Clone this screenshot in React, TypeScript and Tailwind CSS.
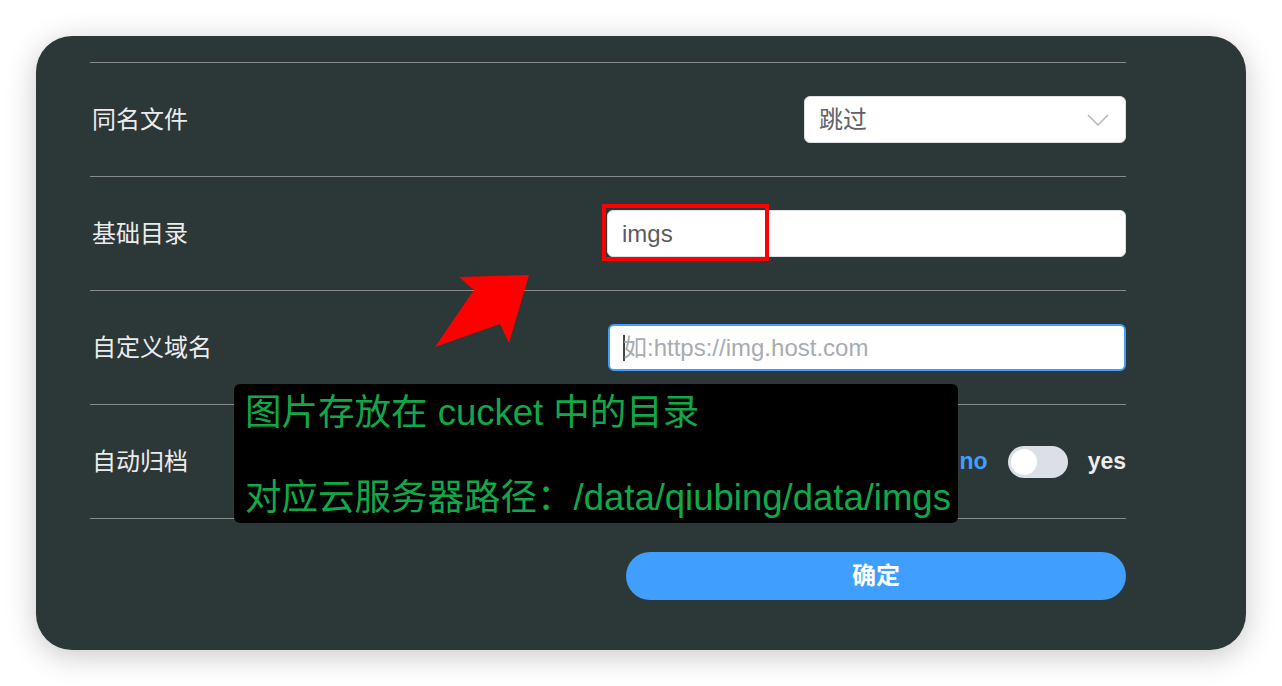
import React from "react";

const font = { fontFamily: '"Liberation Sans", "Noto Sans CJK SC", sans-serif' };

const Row = ({ label, children }: { label: string; children: React.ReactNode }) => (
  <div className="flex h-[114px] items-center justify-between border-t border-[#868a8a]">
    <span className="pl-[2px] text-[24px] text-[#ececec]">{label}</span>
    {children}
  </div>
);

const App = () => {
  return (
    <div className="min-h-[686px] w-full bg-white p-[36px]" style={font}>
      <div className="relative h-[614px] w-[1210px] rounded-[36px] bg-[#2c3738] pl-[54px] pr-[120px] pt-[26px] shadow-[0_6px_30px_rgba(0,0,0,0.22)]">
        <Row label="同名文件">
          <div className="flex h-[47px] w-[322px] items-center justify-between rounded-[6px] border border-[#dcdfe6] bg-white pl-[14px] pr-[16px]">
            <span className="text-[24px] text-[#606266]">跳过</span>
            <svg width="22" height="12" viewBox="0 0 22 12" fill="none">
              <path d="M1 1 L11 11 L21 1" stroke="#b4b7bd" strokeWidth="1.5" />
            </svg>
          </div>
        </Row>
        <Row label="基础目录">
          <div className="relative flex h-[47px] w-[519px] items-center rounded-[6px] border border-[#dcdfe6] bg-white pl-[14px]">
            <span className="text-[24px] text-[#5a5c61]">imgs</span>
            <div className="absolute left-[-6px] top-[-7px] h-[57px] w-[167px] border-[4px] border-[#ff0000]" />
          </div>
        </Row>
        <Row label="自定义域名">
          <div className="flex h-[47px] w-[518px] items-center rounded-[6px] border-2 border-[#409eff] bg-white pl-[13px]">
            <span className="mr-[-2px] h-[26px] w-[2px] bg-[#444]" />
            <span className="text-[24px] text-[#a8abb2]">如:https://img.host.com</span>
          </div>
        </Row>
        <Row label="自动归档">
          <div className="flex items-center">
            <span className="text-[23px] font-bold text-[#409eff]">no</span>
            <div className="ml-[20px] flex h-[32px] w-[60px] items-center rounded-full bg-[#dcdfe6] px-[3px]">
              <div className="h-[26px] w-[26px] rounded-full bg-white" />
            </div>
            <span className="ml-[20px] text-[23px] font-bold text-[#ececec]">yes</span>
          </div>
        </Row>
        <div className="flex justify-end border-t border-[#868a8a] pt-[33px]">
          <button className="h-[48px] w-[500px] rounded-full bg-[#409eff] text-[24px] font-bold text-white">
            确定
          </button>
        </div>

        <svg className="absolute left-[399px] top-[239px]" width="94" height="72" viewBox="0 0 94 72">
          <polygon points="94,0 74,68 65,49 0,72 39,15 24,2" fill="#ff0000" />
        </svg>

        <div className="absolute left-[198px] top-[348px] flex h-[139px] w-[724px] flex-col justify-between rounded-[6px] bg-black pb-[4px] pl-[11px] pt-[8px] text-[36.5px] leading-[42px] text-[#12a84a]">
          <span className="whitespace-nowrap">图片存放在 cucket 中的目录</span>
          <span className="whitespace-nowrap">对应云服务器路径：/data/qiubing/data/imgs</span>
        </div>
      </div>
    </div>
  );
};

export default App;
